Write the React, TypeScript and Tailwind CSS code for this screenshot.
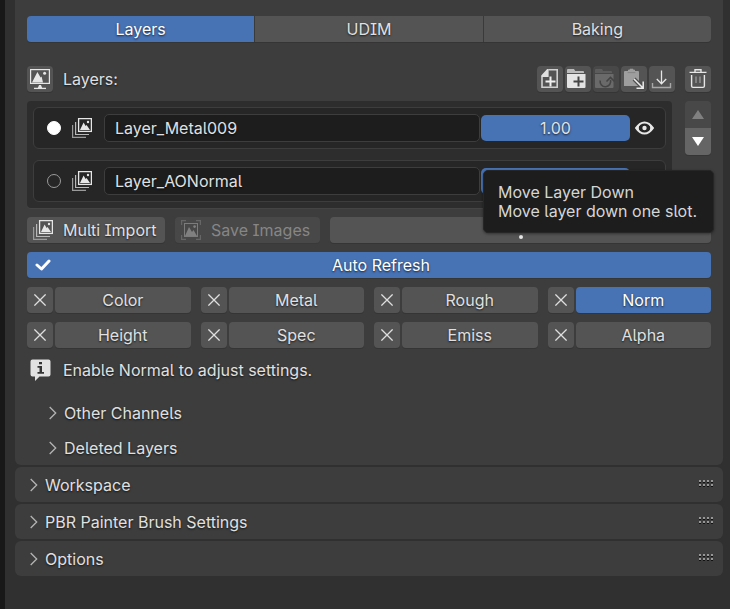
import { useState, type ReactNode } from "react";

const TEXT_SHADOW = "[text-shadow:0_1px_2px_rgba(0,0,0,0.7)]";
const BUTTON = "h-[26px] rounded bg-[#545454] shadow-[0_1px_0_#353535]";

function PictureShapes() {
  return (
    <>
      <rect x="6.6" y="0.6" width="12.8" height="12.8" stroke="#e6e6e6" strokeWidth="1.3" />
      <path d="M8 12 11.6 4.4 13.6 8l1-1 3.4 5z" fill="#e6e6e6" />
      <circle cx="16" cy="4" r="1.2" fill="#e6e6e6" />
    </>
  );
}

function StackIcon() {
  return (
    <svg width="20" height="20" viewBox="0 0 20 20" fill="none" aria-hidden="true">
      <PictureShapes />
      <path d="M3.6 4v12.5H17" stroke="#b8b8b8" strokeWidth="1.2" />
      <path d="M0.6 7v12.4H14" stroke="#9a9a9a" strokeWidth="1.2" />
    </svg>
  );
}

function FramedImageIcon() {
  return (
    <svg width="20" height="20" viewBox="0 0 20 20" fill="none" aria-hidden="true">
      <path d="M.6 5V.6H5M15 .6h4.4V5M19.4 15v4.4H15M5 19.4H.6V15" stroke="#666" strokeWidth="1.2" />
      <rect x="3.5" y="3.5" width="13" height="13" stroke="#7c7c7c" />
      <path d="M4 16 8 7l3 5 1.5-2L16 16z" fill="#808080" />
      <circle cx="13.6" cy="6.6" r="1.3" fill="#808080" />
    </svg>
  );
}

function MonitorIcon() {
  return (
    <svg width="26" height="26" viewBox="0 0 26 26" fill="none" aria-hidden="true">
      <rect x="3.6" y="3.6" width="18.8" height="13.8" stroke="#e6e6e6" strokeWidth="1.2" />
      <path d="M5 16.4 10.4 6l3.2 5.4 1-1 1.4 6z" fill="#e6e6e6" />
      <circle cx="17.6" cy="7.2" r="1.5" fill="#e6e6e6" />
      <path d="M7 22.4h12" stroke="#e6e6e6" strokeWidth="1.3" />
      <path d="M10.8 22 12 19h2l1.2 3z" fill="#e6e6e6" />
    </svg>
  );
}

function NewFileIcon() {
  return (
    <svg width="26" height="26" viewBox="0 0 26 26" fill="none" aria-hidden="true">
      <path d="M11.5 3.7H20.2v17.600H5V11" stroke="#d0d0d0" strokeWidth="1.6" />
      <path d="M11.6 3V11H4.2V9.4l6-6.4z" fill="#e0e0e0" />
      <path d="M13.5 10.5v10M8.500 15.500h10" stroke="#f0f0f0" strokeWidth="2" />
    </svg>
  );
}

function NewFolderIcon() {
  return (
    <svg width="26" height="26" viewBox="0 0 26 26" fill="none" aria-hidden="true">
      <path d="M2 7V4q0-1 1-1h6l1.2 2H18q1 0 1 1v1z" fill="#bcbcbc" />
      <path d="M2 8h18.5v13q0 1-1 1H3q-1 0-1-1z" fill="#e4e4e4" />
      <path d="M13.5 10.5v10M8.500 15.500h10" stroke="#444" strokeWidth="2" />
    </svg>
  );
}

function RestoreFolderIcon() {
  return (
    <svg width="26" height="26" viewBox="0 0 26 26" fill="none" aria-hidden="true">
      <path d="M2 7V4q0-1 1-1h6l1.2 2H18q1 0 1 1v1z" fill="#5c5c5c" />
      <path d="M2 8h18.5v13q0 1-1 1H3q-1 0-1-1z" fill="#6a6a6a" />
      <path d="M7.2 14.5a5.3 5.3 0 1 0 10.3-.5" stroke="#444" strokeWidth="1.6" />
      <path d="M13.500 15.500l4-4 4 4" stroke="#444" strokeWidth="1.6" />
    </svg>
  );
}

function PasteIcon() {
  return (
    <svg width="26" height="26" viewBox="0 0 26 26" fill="none" aria-hidden="true">
      <path d="M3 6q0-1 1-1h3V3.8h1.4L9 2.8h3l.6 1H14V5h3q1 0 1 1v14H3z" fill="#9e9e9e" />
      <path d="M6.6 6.6h7.8" stroke="#858585" />
      <path d="m13 13 9 9M22.2 15.5v6.7h-6.7" stroke="#505050" strokeWidth="4" />
      <path d="m13 13 9 9M22.2 15.5v6.7h-6.7" stroke="#ececec" strokeWidth="1.5" />
    </svg>
  );
}

function DownloadIcon() {
  return (
    <svg width="26" height="26" viewBox="0 0 26 26" fill="none" aria-hidden="true">
      <path d="M12.5 4.5v13M7.8 13l4.7 4.8 4.7-4.8" stroke="#e6e6e6" strokeWidth="1.3" />
      <path d="M3.5 17v4.5h18V17" stroke="#a8a8a8" strokeWidth="1.4" />
    </svg>
  );
}

function TrashIcon() {
  return (
    <svg width="26" height="26" viewBox="0 0 26 26" fill="none" aria-hidden="true">
      <path d="M4.5 6.4h17M10 6V3.7h6V6M6.6 9v11q0 1.4 1.4 1.4h10q1.4 0 1.4-1.4V9" stroke="#e6e6e6" strokeWidth="1.4" />
      <path d="M11 10.5v6.5M15 10.5v6.5" stroke="#999" strokeWidth="1.3" />
    </svg>
  );
}

function EyeIcon() {
  return (
    <svg width="19" height="14" viewBox="0 0 19 14" fill="none" aria-hidden="true">
      <path d="M1 7q3.800-5.600 8.500-5.600T18 7q-3.800 5.600-8.500 5.600T1 7z" stroke="#e8e8e8" strokeWidth="2" fill="#262626" />
      <path d="M6.500 2a6 6 0 0 0 0 10L2.500 9 1.500 7l1-2zM12.500 2a6 6 0 0 1 0 10l4-3 1-2-1-2z" fill="#e8e8e8" />
      <circle cx="9.500" cy="7" r="2.200" fill="#e8e8e8" />
    </svg>
  );
}

function CrossIcon() {
  return (
    <svg width="12" height="12" viewBox="0 0 12 12" fill="none" aria-hidden="true">
      <path d="m.4.4 11.2 11.200M11.600.4.4 11.600" stroke="#dedede" strokeWidth="1.3" />
    </svg>
  );
}

function ChevronIcon() {
  return (
    <svg width="8" height="14" viewBox="0 0 8 14" fill="none" aria-hidden="true">
      <path d="m.7 1 6 6-6 6" stroke="#b4b4b4" strokeWidth="1.3" />
    </svg>
  );
}

function InfoIcon() {
  return (
    <svg width="21" height="22" viewBox="0 0 21 22" fill="none" aria-hidden="true">
      <path d="M2.500.5h16q2 0 2 2v13q0 2-2 2H9.500L5 22v-4.500H2.500q-2 0-2-2v-13q0-2 2-2z" fill="#e2e2e2" />
      <path d="M9 3h3v2.200H9zM7.500 7H12v6h2v1.800H7.500V13h2V8.800h-2z" fill="#333" />
    </svg>
  );
}

function GripIcon() {
  const columns = [0, 4, 8, 12];
  return (
    <svg width="14" height="7" viewBox="0 0 14 7" shapeRendering="crispEdges" className="mb-0.5" aria-hidden="true">
      {columns.map((x) => (
        <g key={x}>
          <rect x={x} y="0" width="2" height="2" fill="#979797" />
          <rect x={x} y="2" width="2" height="1" fill="#111" />
          <rect x={x} y="4" width="2" height="2" fill="#979797" />
          <rect x={x} y="6" width="2" height="1" fill="#111" />
        </g>
      ))}
    </svg>
  );
}

function ToolButton({ label, disabled, children }: { label: string; disabled?: boolean; children: ReactNode }) {
  return (
    <button
      aria-label={label}
      disabled={disabled}
      className="size-[26px] rounded bg-[#545454] shadow-[0_1px_0_#353535] disabled:bg-[#484848]"
    >
      {children}
    </button>
  );
}

function LayerRow({ name, active, onSelect }: { name: string; active: boolean; onSelect: () => void }) {
  return (
    <li className="flex h-[42px] items-center rounded-md border border-[#3d3d3d] bg-[#262626] pr-[11px] pl-[13px]">
      <input
        type="radio"
        name="active-layer"
        aria-label={`Select ${name}`}
        checked={active}
        onChange={onSelect}
        className="size-3.5 shrink-0 appearance-none rounded-full border border-[#9a9a9a] checked:border-white checked:bg-white"
      />
      <span className="mr-3 ml-[11px] shrink-0">
        <StackIcon />
      </span>
      <input
        aria-label="Layer name"
        defaultValue={name}
        className={`h-7 min-w-0 flex-1 rounded-[5px] border border-[#3d3d3d] bg-[#1d1d1d] px-2.5 outline-none ${TEXT_SHADOW}`}
      />
      <input
        aria-label={`${name} opacity`}
        inputMode="decimal"
        defaultValue="1.00"
        className={`ml-px h-[26px] w-[149px] rounded-[5px] bg-[#4772b3] text-center outline-none ${TEXT_SHADOW}`}
      />
      <button aria-label={`Toggle ${name} visibility`} className="ml-[5px] shrink-0">
        <EyeIcon />
      </button>
    </li>
  );
}

function Channel({ name, active }: { name: string; active?: boolean }) {
  return (
    <div className="flex gap-0.5">
      <button
        aria-label={`Clear ${name}`}
        className="flex size-[26px] shrink-0 items-center justify-center rounded bg-[#545454] shadow-[0_1px_0_#353535]"
      >
        <CrossIcon />
      </button>
      <button
        aria-pressed={!!active}
        className={`h-[26px] flex-1 rounded bg-[#545454] shadow-[0_1px_0_#353535] aria-pressed:bg-[#4772b3] aria-pressed:text-white ${TEXT_SHADOW}`}
      >
        {name}
      </button>
    </div>
  );
}

function Section({ title }: { title: string }) {
  return (
    <section className="flex h-[35px] items-center justify-between rounded-md bg-[#3d3d3d] pr-2.5 pl-[15px]">
      <button className={`flex items-center gap-[7px] pt-px ${TEXT_SHADOW}`}>
        <ChevronIcon />
        {title}
      </button>
      <GripIcon />
    </section>
  );
}

const TABS = ["Layers", "UDIM", "Baking"];
const LAYERS = ["Layer_Metal009", "Layer_AONormal"];
const CHANNELS = ["Color", "Metal", "Rough", "Norm", "Height", "Spec", "Emiss", "Alpha"];

export default function App() {
  const [tab, setTab] = useState("Layers");
  const [layer, setLayer] = useState("Layer_Metal009");

  return (
    <div className="min-h-screen border-l-[5px] border-[#181818] bg-[#303030] pr-[7px] pl-2.5 font-['Inter',sans-serif] text-base leading-[19px] text-[#e0e0e0] [font-feature-settings:'ss04']">
      <div className="flex flex-col gap-0.5">
        <main className="flex flex-col gap-[9px] rounded-b-md bg-[#3d3d3d] px-3 pt-4 pb-1">
          <div role="tablist" className="mb-[15px] grid grid-cols-3 gap-px overflow-hidden rounded bg-[#3a3a3a] shadow-[0_1px_0_#353535]">
            {TABS.map((name) => (
              <button
                key={name}
                role="tab"
                aria-selected={tab === name}
                onClick={() => setTab(name)}
                className={`h-[26px] bg-[#545454] aria-selected:bg-[#4772b3] aria-selected:text-white ${TEXT_SHADOW}`}
              >
                {name}
              </button>
            ))}
          </div>

          <div className="flex items-center">
            <ToolButton label="Layer display">
              <MonitorIcon />
            </ToolButton>
            <h2 className={`ml-2.5 flex-1 ${TEXT_SHADOW}`}>Layers:</h2>
            <div className="mr-2.5 flex gap-0.5">
              <ToolButton label="New layer">
                <NewFileIcon />
              </ToolButton>
              <ToolButton label="New folder">
                <NewFolderIcon />
              </ToolButton>
              <ToolButton label="Restore layer" disabled>
                <RestoreFolderIcon />
              </ToolButton>
              <ToolButton label="Paste layer">
                <PasteIcon />
              </ToolButton>
              <ToolButton label="Import layer">
                <DownloadIcon />
              </ToolButton>
            </div>
            <ToolButton label="Delete layer">
              <TrashIcon />
            </ToolButton>
          </div>

          <div className="relative flex items-start gap-[13px]">
            <ul className="flex flex-1 flex-col gap-[11px] rounded bg-[#2d2d2d] p-1.5 shadow-[0_1px_0_#444]">
              {LAYERS.map((name) => (
                <LayerRow key={name} name={name} active={layer === name} onSelect={() => setLayer(name)} />
              ))}
            </ul>
            <div className="flex w-[26px] flex-col overflow-hidden rounded shadow-[0_1px_0_#353535]">
              <button aria-label="Move layer up" disabled className="flex h-[27px] items-center justify-center bg-[#484848]">
                <svg width="12" height="9" viewBox="0 0 12 9" aria-hidden="true">
                  <path d="M6 0 12 9H0z" fill="#808080" />
                </svg>
              </button>
              <button aria-label="Move layer down" className="flex h-[27px] items-center justify-center bg-[#656565]">
                <svg width="12" height="9" viewBox="0 0 12 9" aria-hidden="true">
                  <path d="M6 9 12 0H0z" fill="#fff" />
                </svg>
              </button>
            </div>
            <div
              role="tooltip"
              className="absolute top-[69px] -right-[3px] z-10 rounded-[5px] border border-[#262626] bg-[#1d1d1d] pt-3 pr-4 pb-[11px] pl-3.5 whitespace-nowrap text-[#d6d6d6] shadow-[0_1px_3px_rgba(0,0,0,0.4)]"
            >
              <p>Move Layer Down</p>
              <p>Move layer down one slot.</p>
            </div>
          </div>

          <div className="flex gap-2.5">
            <button className={`flex w-[138px] items-center gap-2.5 pl-1.5 ${BUTTON} ${TEXT_SHADOW}`}>
              <StackIcon />
              Multi Import
            </button>
            <button
              disabled
              className="flex h-[26px] w-[145px] items-center gap-2.5 rounded bg-[#484848] pl-1.5 text-[#868686] shadow-[0_1px_0_#393939]"
            >
              <FramedImageIcon />
              Save Images
            </button>
            <button aria-label="More options" className={`flex flex-1 items-center justify-center ${BUTTON}`}>
              <svg width="4" height="18" viewBox="0 0 4 18" fill="#e6e6e6" aria-hidden="true">
                <circle cx="2" cy="2" r="2" />
                <circle cx="2" cy="9" r="2" />
                <circle cx="2" cy="16" r="2" />
              </svg>
            </button>
          </div>

          <label
            className={`grid h-[26px] grid-cols-[32px_1fr_8px] items-center rounded bg-[#4772b3] text-center text-white shadow-[0_1px_0_#353535] ${TEXT_SHADOW}`}
          >
            <input type="checkbox" defaultChecked className="peer col-start-1 row-start-1 h-[26px] appearance-none" />
            <svg
              width="16"
              height="12"
              viewBox="0 0 16 12"
              fill="none"
              className="invisible col-start-1 row-start-1 justify-self-center peer-checked:visible"
              aria-hidden="true"
            >
              <path d="m2 6 4.500 4L14 2" stroke="#fff" strokeWidth="3" strokeLinecap="round" strokeLinejoin="round" />
            </svg>
            <span>Auto Refresh</span>
          </label>

          <div className="grid grid-cols-4 gap-x-2.5 gap-y-[9px]">
            {CHANNELS.map((name) => (
              <Channel key={name} name={name} active={name === "Norm"} />
            ))}
          </div>

          <p className={`flex h-[26px] items-center gap-3 pl-[3px] ${TEXT_SHADOW}`}>
            <InfoIcon />
            Enable Normal to adjust settings.
          </p>

          <div className="mt-2 flex flex-col gap-[9px] pl-[22px]">
            <button className={`flex h-[26px] items-center gap-[7px] ${TEXT_SHADOW}`}>
              <ChevronIcon />
              Other Channels
            </button>
            <button className={`flex h-[26px] items-center gap-[7px] ${TEXT_SHADOW}`}>
              <ChevronIcon />
              Deleted Layers
            </button>
          </div>
        </main>
        <Section title="Workspace" />
        <Section title="PBR Painter Brush Settings" />
        <Section title="Options" />
      </div>
    </div>
  );
}
